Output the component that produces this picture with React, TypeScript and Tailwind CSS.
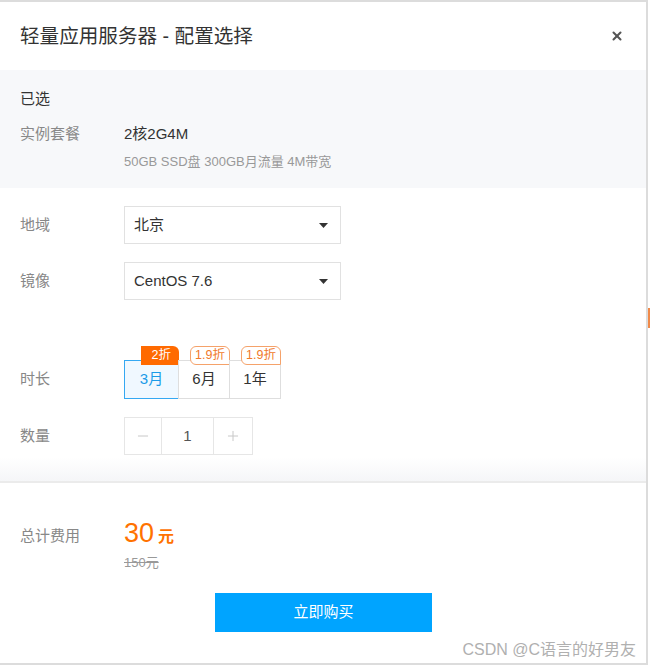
import { Minus, Plus, X } from "lucide-react";

const font = { fontFamily: '"Liberation Sans", "Noto Sans CJK SC", sans-serif' };

function Select({ value }: { value: string }) {
    return (
        <div className="flex h-[38px] w-[217px] items-center justify-between border border-[#e1e1e1] bg-white pl-[9px] pr-[12px] text-[15px] text-[#333]">
            <span>{value}</span>
            <svg width="9" height="5" viewBox="0 0 9 5">
                <path d="M0 0h9L4.5 5z" fill="#333" />
            </svg>
        </div>
    );
}

function Period({ label, tag, active, solid }: { label: string; tag: string; active?: boolean; solid?: boolean }) {
    return (
        <div className="relative">
            <div
                className={`flex h-[39px] items-center justify-center border text-[15px] ${
                    active ? "z-10 w-[55px] border-[#35a8f2] bg-[#f0f8ff] text-[#1a9be8]" : "-ml-px w-[52px] border-[#dedede] bg-white text-[#333]"
                }`}
            >
                {label}
            </div>
            <span
                className={`absolute -top-[14px] right-0 flex h-[19px] items-center text-[12.5px] leading-none ${
                    solid
                        ? "rounded-tr-[6px] bg-[#ff6a00] pl-[11px] pr-[8px] text-white"
                        : "rounded-t-[6px] rounded-bl-[6px] border border-[#f5a26a] bg-white px-[4px] text-[#f07a2a]"
                }`}
            >
                {tag}
            </span>
        </div>
    );
}

export default function App() {
    return (
        <div style={font} className="relative h-[665px] w-[650px] overflow-hidden bg-white">
            <div className="flex h-full w-[648px] flex-col border-t-2 border-r-2 border-b-2 border-[#dcdcdc]">
                {/* header */}
                <div className="flex h-[68px] shrink-0 items-center justify-between pl-[20px] pr-[22px]">
                    <h1 className="pt-[2px] text-[19.6px] text-[#333]">轻量应用服务器 - 配置选择</h1>
                    <X className="h-[14px] w-[14px] text-[#555]" strokeWidth={3.5} />
                </div>

                {/* selected summary */}
                <div className="flex h-[118px] shrink-0 flex-col bg-[#f7f8fa] px-[20px] pt-[18px]">
                    <div className="text-[15px] text-[#333]">已选</div>
                    <div className="mt-[12px] flex text-[15px]">
                        <div className="w-[104px] text-[#888]">实例套餐</div>
                        <div>
                            <div className="text-[#333]">2核2G4M</div>
                            <div className="mt-[7px] text-[13px] text-[#999]">50GB SSD盘 300GB月流量 4M带宽</div>
                        </div>
                    </div>
                </div>

                {/* config */}
                <div className="flex shrink-0 flex-col bg-gradient-to-b from-white from-[92%] to-[#f5f6f8] px-[20px] pt-[18px] pb-[26px] text-[15px]">
                    <div className="flex items-center">
                        <div className="w-[104px] text-[#888]">地域</div>
                        <Select value="北京" />
                    </div>
                    <div className="mt-[18px] flex items-center">
                        <div className="w-[104px] text-[#888]">镜像</div>
                        <Select value="CentOS 7.6" />
                    </div>
                    <div className="mt-[60px] flex items-center">
                        <div className="w-[104px] text-[#888]">时长</div>
                        <div className="flex">
                            <Period label="3月" tag="2折" active solid />
                            <Period label="6月" tag="1.9折" />
                            <Period label="1年" tag="1.9折" />
                        </div>
                    </div>
                    <div className="mt-[18px] flex items-center">
                        <div className="w-[104px] text-[#888]">数量</div>
                        <div className="flex h-[38px] border border-[#e6e6e6]">
                            <div className="flex w-[37px] items-center justify-center border-r border-[#e6e6e6]">
                                <Minus className="h-[16px] w-[16px] text-[#c8c8c8]" strokeWidth={1.5} />
                            </div>
                            <div className="flex w-[52px] items-center justify-center border-r border-[#e6e6e6] text-[15px] text-[#555]">1</div>
                            <div className="flex w-[38px] items-center justify-center">
                                <Plus className="h-[16px] w-[16px] text-[#c8c8c8]" strokeWidth={1.5} />
                            </div>
                        </div>
                    </div>
                </div>

                <div className="h-[2px] shrink-0 bg-[#ebebeb]" />

                {/* footer */}
                <div className="flex flex-1 flex-col px-[20px] pt-[33px]">
                    <div className="flex">
                        <div className="w-[104px] pt-[9px] text-[15px] text-[#888]">总计费用</div>
                        <div>
                            <div className="flex items-baseline text-[#ff7200]">
                                <span className="text-[27px] leading-[34px]">30</span>
                                <span className="ml-[4px] text-[16px] font-bold">元</span>
                            </div>
                            <div className="mt-[3px] text-[13px] text-[#999] line-through">150元</div>
                        </div>
                    </div>
                    <div className="mt-[20px] flex justify-center">
                        <button className="ml-[1px] h-[39px] w-[217px] bg-[#00a4ff] text-[15px] text-white">立即购买</button>
                    </div>
                    <div className="-mr-[10px] mt-[6px] text-right text-[16px] text-[#b0b0b0]">CSDN @C语言的好男友</div>
                </div>
            </div>
            <div className="absolute right-0 top-[308px] h-[20px] w-[2px] bg-[#f08a4a]" />
        </div>
    );
}
